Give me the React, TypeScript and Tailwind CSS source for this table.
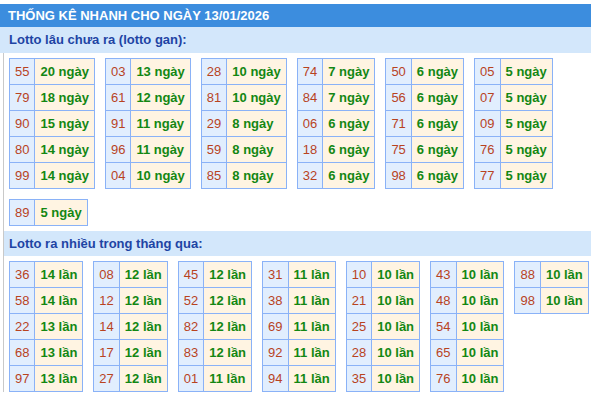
import React from "react";

const ganTables: [string, number][][] = [
  [["55", 20], ["79", 18], ["90", 15], ["80", 14], ["99", 14]],
  [["03", 13], ["61", 12], ["91", 11], ["96", 11], ["04", 10]],
  [["28", 10], ["81", 10], ["29", 8], ["59", 8], ["85", 8]],
  [["74", 7], ["84", 7], ["06", 6], ["18", 6], ["32", 6]],
  [["50", 6], ["56", 6], ["71", 6], ["75", 6], ["98", 6]],
  [["05", 5], ["07", 5], ["09", 5], ["76", 5], ["77", 5]],
  [["89", 5]],
];

const hotTables: [string, number][][] = [
  [["36", 14], ["58", 14], ["22", 13], ["68", 13], ["97", 13]],
  [["08", 12], ["12", 12], ["14", 12], ["17", 12], ["27", 12]],
  [["45", 12], ["52", 12], ["82", 12], ["83", 12], ["01", 11]],
  [["31", 11], ["38", 11], ["69", 11], ["92", 11], ["94", 11]],
  [["10", 10], ["21", 10], ["25", 10], ["28", 10], ["35", 10]],
  [["43", 10], ["48", 10], ["54", 10], ["65", 10], ["76", 10]],
  [["88", 10], ["98", 10]],
];

function LotoTable({ rows, unit }: { rows: [string, number][]; unit: string }) {
  return (
    <table className="border-collapse text-[13px] leading-[15px]">
      <tbody>
        {rows.map(([num, count]) => (
          <tr key={num}>
            <td className="border border-[#8ab2f7] bg-[#e1eefe] p-[5px] text-[#b8431f]">{num}</td>
            <td className="border border-[#8ab2f7] bg-[#fff4e2] p-[5px] font-bold text-[#138713] whitespace-nowrap">
              {count} {unit}
            </td>
          </tr>
        ))}
      </tbody>
    </table>
  );
}

export default function App() {
  return (
    <div className="w-[591px] h-[397px] overflow-hidden bg-white pt-1 font-['Liberation_Sans',Arial,sans-serif]">
      <div className="h-[23px] bg-[#3c8dde] pl-2 text-[13px] font-bold leading-[23px] text-white">
        THỐNG KÊ NHANH CHO NGÀY 13/01/2026
      </div>
      <div className="h-[26px] bg-[#d3e7fb] pl-[9px] text-[13px] font-bold leading-[26px] text-[#1e44a4]">
        Lotto lâu chưa ra (lotto gan):
      </div>
      <div className="ml-[3px] border-l border-[#c9c9c9]">
        <div className="flex flex-wrap items-start gap-x-[10px] gap-y-[10px] py-[5px] pl-[5px]">
          {ganTables.map((t, i) => (
            <LotoTable key={i} rows={t} unit="ngày" />
          ))}
        </div>
        <div className="h-[25px] bg-[#d3e7fb] pl-[5px] text-[13px] font-bold leading-[25px] text-[#1e44a4]">
          Lotto ra nhiều trong tháng qua:
        </div>
        <div className="flex flex-wrap items-start gap-x-[10px] gap-y-[10px] pt-[5px] pl-[5px]">
          {hotTables.map((t, i) => (
            <LotoTable key={i} rows={t} unit="lần" />
          ))}
        </div>
      </div>
    </div>
  );
}
